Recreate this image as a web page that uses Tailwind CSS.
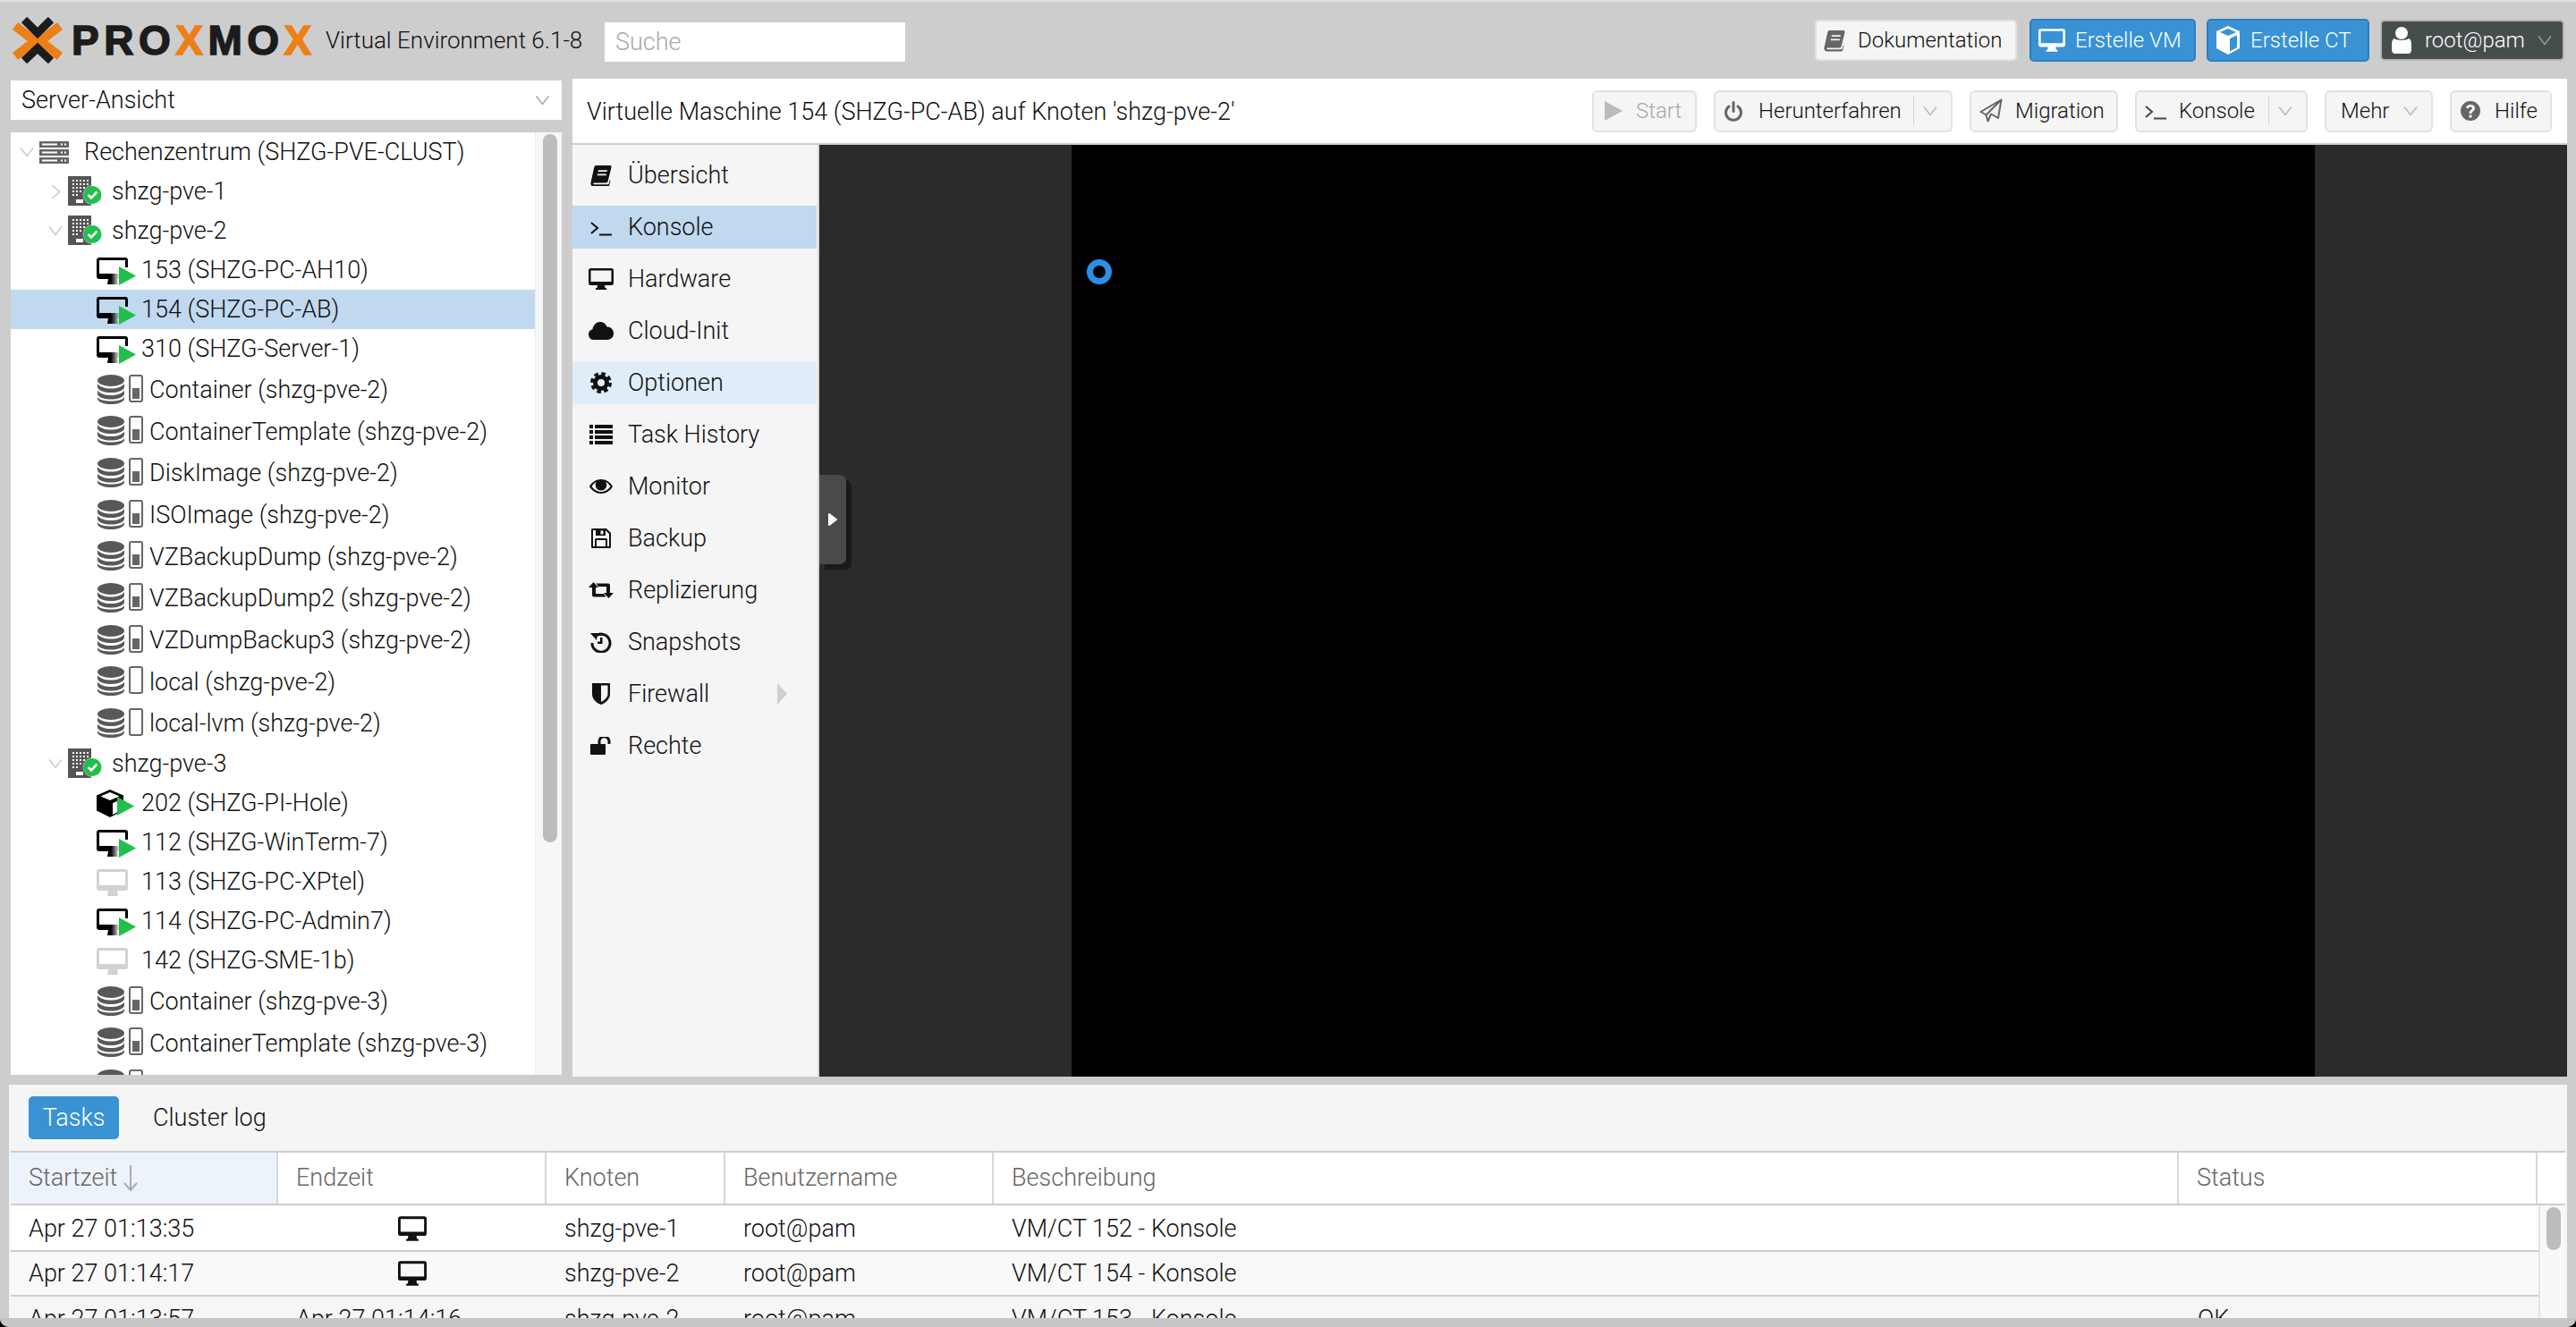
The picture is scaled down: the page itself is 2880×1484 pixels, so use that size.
<!DOCTYPE html>
<html lang="de">
<head>
  <meta charset="UTF-8" />
  <title>Proxmox Virtual Environment</title>
  <script src="https://cdn.jsdelivr.net/npm/@tailwindcss/browser@4"></script>
</head>
<body class="bg-black">
<!-- icon sheet -->
<svg class="absolute w-0 h-0">
  <defs>
    <linearGradient id="fade" x1="0" x2="1" y1="0" y2="0"><stop offset="0" stop-color="#fff"/><stop offset="1" stop-color="#000"/></linearGradient>
    <mask id="vmfade" maskUnits="userSpaceOnUse" x="0" y="0" width="44" height="34">
      <rect width="44" height="34" fill="#fff"/>
      <rect x="16" y="14" width="10" height="20" fill="url(#fade)"/>
      <rect x="26" y="14" width="18" height="20" fill="#000"/>
    </mask>
    <symbol id="vm-run" viewBox="0 0 44 34">
      <path mask="url(#vmfade)" fill="#000" fill-rule="evenodd" d="M3 3h29a3 3 0 0 1 3 3v18a3 3 0 0 1-3 3h-9l1 6h-12l1-6H3a3 3 0 0 1-3-3V6a3 3 0 0 1 3-3zM3 6v15h29V6z"/>
      <path fill="#21bf4b" d="M25 13l19 10.500L25 34z"/>
    </symbol>
    <symbol id="vm-off" viewBox="0 0 44 34">
      <path fill="#d2d2d2" fill-rule="evenodd" d="M3 3h29a3 3 0 0 1 3 3v18a3 3 0 0 1-3 3h-9l1 6h-12l1-6H3a3 3 0 0 1-3-3V6a3 3 0 0 1 3-3zM3 6v15h29V6z"/>
    </symbol>
    <symbol id="ct-run" viewBox="0 0 44 34">
      <path fill="#000" d="M15 2l15 6.500v17L15 33 0 25.500v-17z"/>
      <path fill="#fff" d="M15 5l10.500 4.500L15 14 4.500 9.500z"/>
      <path fill="#fff" d="M18 17l10-4v12l-10 5z"/>
      <path fill="#21bf4b" d="M23 10l19 10.500L23 31z"/>
    </symbol>
    <symbol id="node" viewBox="0 0 38 34">
      <path fill="#555" d="M0 0h26v33H0z"/>
      <path fill="#fff" d="M5 4h2v2H5zM9 4h2v2H9zM13 4h2v2h-2zM17 4h2v2h-2zM21 4h2v2h-2zM5 8h2v2H5zM9 8h2v2H9zM13 8h2v2h-2zM17 8h2v2h-2zM21 8h2v2h-2zM5 12h2v2H5zM9 12h2v2H9zM13 12h2v2h-2zM17 12h2v2h-2zM5 16h2v2H5zM9 16h2v2H9zM13 16h2v2h-2zM5 20h2v2H5zM9 20h2v2H9zM9 26h8v4H9z"/>
      <circle cx="27.500" cy="21" r="11" fill="#fff" fill-opacity=".45"/>
      <circle cx="27.500" cy="21" r="10" fill="#21bf4b"/>
      <path fill="none" stroke="#fff" stroke-width="2.600" d="M22.500 21l3.500 3.500 6.500-7"/>
    </symbol>
    <symbol id="dc" viewBox="0 0 33 25">
      <path fill="#666" fill-rule="evenodd" d="M0 0h33v7H0zM3 2.500v2h17v-2zM24 2.500v2h2v-2zM28 2.500v2h2v-2zM0 9h33v7H0zM3 11.500v2h17v-2zM24 11.500v2h2v-2zM28 11.500v2h2v-2zM0 18h33v7H0zM3 20.500v2h17v-2zM24 20.500v2h2v-2zM28 20.500v2h2v-2z"/>
    </symbol>
    <symbol id="store" viewBox="0 0 51 33">
      <ellipse cx="15" cy="6.500" rx="15" ry="6.500" fill="#585858"/>
      <path fill="#585858" d="M0 10c2 3.500 8 5.500 15 5.500S28 13.500 30 10v4c-1 4-8 6-15 6S1 18 0 14zM0 17.500c2 3.500 8 5.500 15 5.500s13-2 15-5.500v4c-1 4-8 6-15 6s-14-2-15-6zM0 25c2 3.500 8 4.500 15 4.500S28 28.500 30 25v2.500C29 31 22 33 15 33S1 31 0 27.500z"/>
      <rect x="36" y="1" width="14" height="29" rx="2" fill="none" stroke="#666" stroke-width="2"/>
      <rect x="39" y="15" width="8" height="12" fill="#666"/>
    </symbol>
    <symbol id="store-empty" viewBox="0 0 51 33">
      <ellipse cx="15" cy="6.500" rx="15" ry="6.500" fill="#585858"/>
      <path fill="#585858" d="M0 10c2 3.500 8 5.500 15 5.500S28 13.500 30 10v4c-1 4-8 6-15 6S1 18 0 14zM0 17.500c2 3.500 8 5.500 15 5.500s13-2 15-5.500v4c-1 4-8 6-15 6s-14-2-15-6zM0 25c2 3.500 8 4.500 15 4.500S28 28.500 30 25v2.500C29 31 22 33 15 33S1 31 0 27.500z"/>
      <rect x="36" y="1" width="14" height="29" rx="2" fill="none" stroke="#666" stroke-width="2"/>
    </symbol>
    <symbol id="book" viewBox="0 0 24 24">
      <path fill="currentColor" fill-rule="evenodd" d="M6.500 1H22c1.200 0 1.800 1 1.500 2.200l-3.800 15.300c-.3 1.200-1 2-2.500 2H4.700c-1.300 0-1.600.7-1.300 1.200.3.400.9.600 1.600.6h14.500c.6 0 1-.3 1.300-1l1-4 .7.600-1.300 5.300c-.2.700-.9 1.300-1.800 1.300H4C1.800 24.500 0 23 .4 20.700L4.300 3C4.600 1.900 5.400 1 6.500 1zM9 6.200l-.4 1.800h10l.4-1.800zM8 10.500l-.4 1.800h10l.4-1.800z"/>
    </symbol>
    <symbol id="term" viewBox="0 0 24 24">
      <path fill="none" stroke="currentColor" stroke-width="2" d="M1 7l7 6-7 6M10 20.500h14"/>
    </symbol>
    <symbol id="desk" viewBox="0 0 28 24">
      <path fill="currentColor" fill-rule="evenodd" d="M2.500 0h23A2.500 2.500 0 0 1 28 2.500v14a2.500 2.500 0 0 1-2.500 2.500H18l.5 3h1.500v2H8v-2h1.500l.5-3H2.500A2.500 2.500 0 0 1 0 16.500v-14A2.500 2.500 0 0 1 2.500 0zM2.500 2.500V15h23V2.500z"/>
    </symbol>
    <symbol id="cloud" viewBox="0 0 28 20">
      <path fill="currentColor" d="M6 20a6 6 0 0 1-1.500-11.800C5 3.500 9 0 13 0c3.500 0 6.500 2.200 7.500 5.500 4-.5 7.500 3 7.500 7.500 0 4-3 7-7 7z"/>
    </symbol>
    <symbol id="gear" viewBox="0 0 24 24">
      <circle cx="12" cy="12" r="6.500" fill="none" stroke="currentColor" stroke-width="5"/>
      <circle cx="12" cy="12" r="10" fill="none" stroke="currentColor" stroke-width="4" stroke-dasharray="4.500 3.354"/>
    </symbol>
    <symbol id="list" viewBox="0 0 26 22">
      <path fill="currentColor" d="M0 0h4v4H0zM6 0h20v4H6zM0 6h4v4H0zM6 6h20v4H6zM0 12h4v4H0zM6 12h20v4H6zM0 18h4v4H0zM6 18h20v4H6z"/>
    </symbol>
    <symbol id="eye" viewBox="0 0 26 16">
      <path fill="currentColor" fill-rule="evenodd" d="M13 0c5.500 0 10.500 3.500 13 8-2.500 4.500-7.500 8-13 8S2.500 12.500 0 8c2.500-4.500 7.500-8 13-8zM2.500 8c2.500 3.500 6.500 6 10.500 6s8-2.500 10.500-6C21.500 5 19.500 3.500 18 2.800c.8 1.100 1.300 2.200 1.300 3.400a6.300 6.300 0 0 1-12.600 0c0-1.300.5-2.400 1.300-3.400C6.500 3.500 4.500 5 2.500 8z"/>
    </symbol>
    <symbol id="save" viewBox="0 0 22 22">
      <path fill="currentColor" fill-rule="evenodd" d="M1.500 0H17l5 5v15.500a1.500 1.500 0 0 1-1.500 1.500h-19A1.500 1.500 0 0 1 0 20.500v-19A1.500 1.500 0 0 1 1.500 0zM2 2v18h2v-7.500A1.500 1.500 0 0 1 5.500 11h11a1.500 1.500 0 0 1 1.500 1.500V20h2V6l-4-4v6H5V2zM6 13v7h10v-7zM10.500 2.500V6.500H13.500V2.500z"/>
    </symbol>
    <symbol id="retweet" viewBox="0 0 28 18">
      <path fill="currentColor" d="M0 6l5.500-6L11 6H8v7h9l2.500 3.500H6a2 2 0 0 1-2-2V6zM28 12l-5.500 6L17 12h3V5h-9L8.500 1.500H22a2 2 0 0 1 2 2V12z"/>
    </symbol>
    <symbol id="history" viewBox="0 0 24 24">
      <path fill="none" stroke="currentColor" stroke-width="3" d="M5 6a10 10 0 1 1-3 7"/>
      <path fill="currentColor" d="M0 2l8 0-1 8zM11 7h2.500v7H8v-2.500h3z"/>
    </symbol>
    <symbol id="shield" viewBox="0 0 20 24">
      <path fill="currentColor" fill-rule="evenodd" d="M0 0h20v12c0 6-5 10-10 12C5 22 0 18 0 12zM10 2.500v18.500c4-2 7.500-5 7.500-9V2.500z"/>
    </symbol>
    <symbol id="unlock" viewBox="0 0 24 20">
      <path fill="currentColor" d="M1 8h15a1 1 0 0 1 1 1v10a1 1 0 0 1-1 1H1a1 1 0 0 1-1-1V9a1 1 0 0 1 1-1z"/>
      <path fill="none" stroke="currentColor" stroke-width="3" d="M10 9V6a5.500 5.500 0 0 1 11-1.500V8"/>
    </symbol>
    <symbol id="power" viewBox="0 0 20 24">
      <path fill="none" stroke="currentColor" stroke-width="3" stroke-linecap="round" d="M5 6.500a8.500 8.500 0 1 0 10 0M10 2v10"/>
    </symbol>
    <symbol id="plane" viewBox="0 0 26 28">
      <path fill="none" stroke="currentColor" stroke-width="2" stroke-linejoin="round" d="M24.500 1.500L1.500 15l6 3.500L24.500 1.500 21 22l-8-4.500-3.500 8-2-7"/>
    </symbol>
    <symbol id="help" viewBox="0 0 22 22">
      <path fill="currentColor" fill-rule="evenodd" d="M11 0a11 11 0 1 1 0 22 11 11 0 0 1 0-22zM9.500 15.500v3h3v-3zM11 4C8 4 6.500 5.500 6 7.500l2.500 1c.3-1.200 1.200-2 2.400-2 1.200 0 2 .6 2 1.500 0 1.800-3.400 2.300-3.400 5.500v.5h3v-.4c0-1.700 3.500-2.400 3.500-5.800C16 5.500 13.800 4 11 4z"/>
    </symbol>
    <symbol id="user" viewBox="0 0 22 30">
      <circle cx="11" cy="7" r="7" fill="currentColor"/>
      <path fill="currentColor" d="M3 13c2 2.500 14 2.500 16 0 2 .5 3 3 3 7v6c0 2-1.500 4-3.500 4h-15C1.500 30 0 28 0 26v-6c0-4 1-6.500 3-7z"/>
    </symbol>
    <symbol id="cube-w" viewBox="0 0 26 32">
      <path fill="currentColor" fill-rule="evenodd" d="M13 0l13 6v19l-13 7-13-7V6zM13 3L4 7l9 4 9-4zM15 14v14.500l8-4.500V10.500z"/>
    </symbol>
    <symbol id="chev" viewBox="0 0 16 12">
      <path fill="none" stroke="currentColor" stroke-width="1.600" d="M1 1.500l7 9 7-9"/>
    </symbol>
    <symbol id="chev-r" viewBox="0 0 12 18">
      <path fill="none" stroke="currentColor" stroke-width="1.600" d="M1.500 1l9 8-9 8"/>
    </symbol>
  </defs>
</svg>

<div class="w-[2880px] h-[1484px] bg-[#cdcdcd] rounded-b-[10px] overflow-hidden flex flex-col font-['Roboto',sans-serif] font-light text-[27px] text-[#111]">

  <!-- header -->
  <header class="h-[88px] shrink-0 border-t-[2px] border-[#e2e2e2] flex items-center pr-[13px]">
    <div class="flex items-center w-[364px] pl-[14px] shrink-0">
      <svg class="w-[56px] h-[52px] shrink-0" viewBox="0 0 56 52">
        <path fill="none" stroke="#ec7f16" stroke-width="10" d="M3 10l22 17-22 17M53 10L31 27l22 17" />
        <path fill="none" stroke="#1c1c1c" stroke-width="9" d="M13 3l15 15 15-15M13 49l15-14 15 14" />
      </svg>
      <span class="ml-[10px] font-['Liberation_Sans',sans-serif] text-[46px] leading-none font-bold tracking-[5.500px] [-webkit-text-stroke:1.5px_#1c1c1c] text-[#1c1c1c] whitespace-nowrap">PRO<span class="text-[#ec7f16] [-webkit-text-stroke:1.5px_#ec7f16]">X</span>MO<span class="text-[#ec7f16] [-webkit-text-stroke:1.5px_#ec7f16]">X</span></span>
    </div>
    <span class="whitespace-nowrap w-[312px] shrink-0 text-[26px]">Virtual Environment 6.1-8</span>
    <div class="w-[336px] h-[44px] bg-white flex items-center pl-[12px] text-[#aaa] mt-[4px]">Suche</div>
    <div class="ml-auto flex items-center gap-[12px] text-[24px]">
      <button class="w-[226px] h-[46px] rounded-[5px] bg-[#f5f5f5] border-[2px] border-[#e2e2e2] flex items-center pl-[8px] mr-[2px]">
        <svg class="w-[24px] h-[26px] text-[#666]"><use href="#book"/></svg>
        <span class="ml-[14px]">Dokumentation</span>
      </button>
      <button class="w-[186px] h-[48px] rounded-[5px] bg-[#3892d4] border-[2px] border-[#2a80c0] text-white flex items-center pl-[8px]">
        <svg class="w-[30px] h-[30px]"><use href="#desk"/></svg>
        <span class="ml-[11px]">Erstelle VM</span>
      </button>
      <button class="w-[182px] h-[48px] rounded-[5px] bg-[#3892d4] border-[2px] border-[#2a80c0] text-white flex items-center pl-[9px]">
        <svg class="w-[26px] h-[32px]"><use href="#cube-w"/></svg>
        <span class="ml-[12px]">Erstelle CT</span>
      </button>
      <button class="w-[206px] h-[46px] rounded-[5px] bg-[#464d4d] border-[2px] border-[#b4b4b4] text-white flex items-center pl-[11px]">
        <svg class="w-[22px] h-[30px]"><use href="#user"/></svg>
        <span class="ml-[15px]">root@pam</span>
        <svg class="w-[16px] h-[12px] ml-[14px] text-[#999]"><use href="#chev"/></svg>
      </button>
    </div>
  </header>

  <!-- main -->
  <div class="h-[1116px] shrink-0 flex pl-[12px] gap-[12px]">
    <!-- left column -->
    <div class="w-[616px] shrink-0 flex flex-col pt-[2px] pb-[2px]">
      <div class="h-[44px] bg-white flex items-center justify-between pl-[12px] pr-[13px] shrink-0">
        <span>Server-Ansicht</span>
        <svg class="w-[17px] h-[12px] text-[#aaa]"><use href="#chev"/></svg>
      </div>
      <div class="mt-[14px] flex-1 min-h-0 bg-white relative overflow-hidden">
        <!-- scrollbar -->
        <div class="absolute right-0 top-0 bottom-0 w-[30px] bg-[#f7f7f7] border-l border-[#ebebeb]">
          <div class="absolute left-[8px] top-[2px] w-[16px] h-[792px] rounded-full bg-[#bcbcbc]"></div>
        </div>

        <div class="h-[44px] flex items-center pl-[10px] mr-[30px]">
          <svg class="w-[16px] h-[12px] text-[#ccc]"><use href="#chev"/></svg>
          <svg class="w-[33px] h-[25px] ml-[6px]"><use href="#dc"/></svg>
          <span class="ml-[17px] whitespace-nowrap">Rechenzentrum (SHZG-PVE-CLUST)</span>
        </div>
        <div class="h-[44px] flex items-center pl-[45px] mr-[30px]">
          <svg class="w-[11px] h-[17px] text-[#ccc]"><use href="#chev-r"/></svg>
          <svg class="w-[38px] h-[34px] ml-[8px]"><use href="#node"/></svg>
          <span class="ml-[11px]">shzg-pve-1</span>
        </div>
        <div class="h-[44px] flex items-center pl-[42px] mr-[30px]">
          <svg class="w-[16px] h-[12px] text-[#ccc]"><use href="#chev"/></svg>
          <svg class="w-[38px] h-[34px] ml-[6px]"><use href="#node"/></svg>
          <span class="ml-[11px]">shzg-pve-2</span>
        </div>
        <div class="h-[44px] flex items-center pl-[96px] mr-[30px]"><svg class="w-[44px] h-[34px]"><use href="#vm-run"/></svg><span class="ml-[6px]">153 (SHZG-PC-AH10)</span></div>
        <div class="h-[44px] flex items-center pl-[96px] mr-[30px] bg-[#c0d9ef]"><svg class="w-[44px] h-[34px]"><use href="#vm-run"/></svg><span class="ml-[6px]">154 (SHZG-PC-AB)</span></div>
        <div class="h-[44px] flex items-center pl-[96px] mr-[30px]"><svg class="w-[44px] h-[34px]"><use href="#vm-run"/></svg><span class="ml-[6px]">310 (SHZG-Server-1)</span></div>
        <div class="h-[46.67px] flex items-center pl-[97px] mr-[30px]"><svg class="w-[51px] h-[33px]"><use href="#store"/></svg><span class="ml-[7px] mt-[2px]">Container (shzg-pve-2)</span></div>
        <div class="h-[46.67px] flex items-center pl-[97px] mr-[30px]"><svg class="w-[51px] h-[33px]"><use href="#store"/></svg><span class="ml-[7px] mt-[2px]">ContainerTemplate (shzg-pve-2)</span></div>
        <div class="h-[46.67px] flex items-center pl-[97px] mr-[30px]"><svg class="w-[51px] h-[33px]"><use href="#store"/></svg><span class="ml-[7px] mt-[2px]">DiskImage (shzg-pve-2)</span></div>
        <div class="h-[46.67px] flex items-center pl-[97px] mr-[30px]"><svg class="w-[51px] h-[33px]"><use href="#store"/></svg><span class="ml-[7px] mt-[2px]">ISOImage (shzg-pve-2)</span></div>
        <div class="h-[46.67px] flex items-center pl-[97px] mr-[30px]"><svg class="w-[51px] h-[33px]"><use href="#store"/></svg><span class="ml-[7px] mt-[2px]">VZBackupDump (shzg-pve-2)</span></div>
        <div class="h-[46.67px] flex items-center pl-[97px] mr-[30px]"><svg class="w-[51px] h-[33px]"><use href="#store"/></svg><span class="ml-[7px] mt-[2px]">VZBackupDump2 (shzg-pve-2)</span></div>
        <div class="h-[46.67px] flex items-center pl-[97px] mr-[30px]"><svg class="w-[51px] h-[33px]"><use href="#store"/></svg><span class="ml-[7px] mt-[2px]">VZDumpBackup3 (shzg-pve-2)</span></div>
        <div class="h-[46.67px] flex items-center pl-[97px] mr-[30px]"><svg class="w-[51px] h-[33px]"><use href="#store-empty"/></svg><span class="ml-[7px] mt-[2px]">local (shzg-pve-2)</span></div>
        <div class="h-[46.67px] flex items-center pl-[97px] mr-[30px]"><svg class="w-[51px] h-[33px]"><use href="#store-empty"/></svg><span class="ml-[7px] mt-[2px]">local-lvm (shzg-pve-2)</span></div>
        <div class="h-[44px] flex items-center pl-[42px] mr-[30px]">
          <svg class="w-[16px] h-[12px] text-[#ccc]"><use href="#chev"/></svg>
          <svg class="w-[38px] h-[34px] ml-[6px]"><use href="#node"/></svg>
          <span class="ml-[11px] mt-[1px]">shzg-pve-3</span>
        </div>
        <div class="h-[44px] flex items-center pl-[96px] mr-[30px]"><svg class="w-[44px] h-[34px]"><use href="#ct-run"/></svg><span class="ml-[6px]">202 (SHZG-PI-Hole)</span></div>
        <div class="h-[44px] flex items-center pl-[96px] mr-[30px]"><svg class="w-[44px] h-[34px]"><use href="#vm-run"/></svg><span class="ml-[6px]">112 (SHZG-WinTerm-7)</span></div>
        <div class="h-[44px] flex items-center pl-[96px] mr-[30px]"><svg class="w-[44px] h-[34px]"><use href="#vm-off"/></svg><span class="ml-[6px]">113 (SHZG-PC-XPtel)</span></div>
        <div class="h-[44px] flex items-center pl-[96px] mr-[30px]"><svg class="w-[44px] h-[34px]"><use href="#vm-run"/></svg><span class="ml-[6px]">114 (SHZG-PC-Admin7)</span></div>
        <div class="h-[44px] flex items-center pl-[96px] mr-[30px]"><svg class="w-[44px] h-[34px]"><use href="#vm-off"/></svg><span class="ml-[6px]">142 (SHZG-SME-1b)</span></div>
        <div class="h-[46.67px] flex items-center pl-[97px] mr-[30px]"><svg class="w-[51px] h-[33px]"><use href="#store"/></svg><span class="ml-[7px] mt-[2px]">Container (shzg-pve-3)</span></div>
        <div class="h-[46.67px] flex items-center pl-[97px] mr-[30px]"><svg class="w-[51px] h-[33px]"><use href="#store"/></svg><span class="ml-[7px] mt-[2px]">ContainerTemplate (shzg-pve-3)</span></div>
        <div class="h-[46.67px] flex items-center pl-[97px] mr-[30px]"><svg class="w-[51px] h-[33px]"><use href="#store"/></svg></div>
      </div>
    </div>

    <!-- right column -->
    <div class="w-[2230px] shrink-0 flex flex-col">
      <div class="h-[72px] bg-white shrink-0 flex items-center pl-[16px] pr-[17px]">
        <span class="whitespace-nowrap mt-[2px]">Virtuelle Maschine 154 (SHZG-PC-AB) auf Knoten 'shzg-pve-2'</span>
        <div class="ml-auto flex items-center gap-[19px] text-[24px]">
          <button class="w-[117px] h-[47px] rounded-[6px] bg-[#f5f5f5] border-[2px] border-[#e2e2e2] flex items-center pl-[12px] text-[#a8a8a8]">
            <svg class="w-[20px] h-[22px] text-[#bbb]" viewBox="0 0 20 22"><path fill="currentColor" d="M0 0l20 11L0 22z"/></svg>
            <span class="ml-[15px]">Start</span>
          </button>
          <button class="w-[267px] h-[47px] rounded-[6px] bg-[#f5f5f5] border-[2px] border-[#e2e2e2] flex items-center pl-[10px]">
            <svg class="w-[20px] h-[25px] text-[#666]"><use href="#power"/></svg>
            <span class="ml-[18px] w-[173px] text-left">Herunterfahren</span>
            <span class="w-[1px] h-[32px] bg-[#d4d4d4]"></span>
            <svg class="w-[16px] h-[12px] ml-[10px] text-[#bbb]"><use href="#chev"/></svg>
          </button>
          <button class="w-[166px] h-[47px] rounded-[6px] bg-[#f5f5f5] border-[2px] border-[#e2e2e2] flex items-center pl-[9px]">
            <svg class="w-[26px] h-[28px] text-[#666]"><use href="#plane"/></svg>
            <span class="ml-[14px]">Migration</span>
          </button>
          <button class="w-[193px] h-[47px] rounded-[6px] bg-[#f5f5f5] border-[2px] border-[#e2e2e2] flex items-center pl-[9px]">
            <svg class="w-[24px] h-[24px] text-[#444]"><use href="#term"/></svg>
            <span class="ml-[14px] w-[100px] text-left">Konsole</span>
            <span class="w-[1px] h-[32px] bg-[#d4d4d4]"></span>
            <svg class="w-[16px] h-[12px] ml-[10px] text-[#bbb]"><use href="#chev"/></svg>
          </button>
          <button class="w-[121px] h-[47px] rounded-[6px] bg-[#f5f5f5] border-[2px] border-[#e2e2e2] flex items-center pl-[16px]">
            <span class="w-[70px] text-left">Mehr</span>
            <svg class="w-[16px] h-[12px] text-[#bbb]"><use href="#chev"/></svg>
          </button>
          <button class="w-[114px] h-[47px] rounded-[6px] bg-[#f5f5f5] border-[2px] border-[#e2e2e2] flex items-center pl-[10px]">
            <svg class="w-[22px] h-[22px] text-[#666]"><use href="#help"/></svg>
            <span class="ml-[16px]">Hilfe</span>
          </button>
        </div>
      </div>
      <div class="flex-1 min-h-0 mt-[2px] flex">
        <!-- sub menu -->
        <nav class="w-[276px] shrink-0 bg-[#f5f5f5] border-r-[2px] border-[#d8d8d8] pr-[1px] pt-[10px]">
          <a class="h-[48px] mb-[10px] flex items-center"><svg class="w-[24px] h-[24px] ml-[20px] mr-[18px] text-[#111]"><use href="#book"/></svg>Übersicht</a>
          <a class="h-[48px] mb-[10px] flex items-center bg-[#c0d9ef]"><svg class="w-[24px] h-[24px] ml-[20px] mr-[18px] text-[#111]"><use href="#term"/></svg>Konsole</a>
          <a class="h-[48px] mb-[10px] flex items-center"><svg class="w-[28px] h-[24px] ml-[18px] mr-[16px] text-[#111]"><use href="#desk"/></svg>Hardware</a>
          <a class="h-[48px] mb-[10px] flex items-center"><svg class="w-[28px] h-[20px] ml-[18px] mr-[16px] text-[#111]"><use href="#cloud"/></svg>Cloud-Init</a>
          <a class="h-[48px] mb-[10px] flex items-center bg-[#e0edf8]"><svg class="w-[24px] h-[24px] ml-[20px] mr-[18px] text-[#111]"><use href="#gear"/></svg>Optionen</a>
          <a class="h-[48px] mb-[10px] flex items-center"><svg class="w-[26px] h-[22px] ml-[19px] mr-[17px] text-[#111]"><use href="#list"/></svg>Task History</a>
          <a class="h-[48px] mb-[10px] flex items-center"><svg class="w-[26px] h-[16px] ml-[19px] mr-[17px] text-[#111]"><use href="#eye"/></svg>Monitor</a>
          <a class="h-[48px] mb-[10px] flex items-center"><svg class="w-[22px] h-[22px] ml-[21px] mr-[19px] text-[#111]"><use href="#save"/></svg>Backup</a>
          <a class="h-[48px] mb-[10px] flex items-center"><svg class="w-[28px] h-[18px] ml-[18px] mr-[16px] text-[#111]"><use href="#retweet"/></svg>Replizierung</a>
          <a class="h-[48px] mb-[10px] flex items-center"><svg class="w-[24px] h-[24px] ml-[20px] mr-[18px] text-[#111]"><use href="#history"/></svg>Snapshots</a>
          <a class="h-[48px] mb-[10px] flex items-center"><svg class="w-[20px] h-[24px] ml-[22px] mr-[20px] text-[#111]"><use href="#shield"/></svg>Firewall
            <svg class="w-[11px] h-[24px] ml-auto mr-[33px] text-[#cfcfcf]" viewBox="0 0 11 24"><path fill="currentColor" d="M0 0l11 12L0 24z"/></svg>
          </a>
          <a class="h-[48px] flex items-center"><svg class="w-[24px] h-[20px] ml-[20px] mr-[18px] text-[#111]"><use href="#unlock"/></svg>Rechte</a>
        </nav>
        <!-- console area -->
        <div class="flex-1 min-w-0 bg-[#2b2b2b] relative flex justify-start pl-[282px]">
          <div class="w-[1390px] bg-black relative">
            <div class="absolute left-[17px] top-[128px] w-[28px] h-[28px] rounded-full border-[7px] border-[#2a90e6]"></div>
          </div>
          <!-- collapse handle -->
          <div class="absolute left-0 top-[369px] w-[30px] h-[100px] bg-[#4a4a4a] rounded-r-[7px] shadow-[6px_6px_0_#1a1a1a] flex items-center justify-center">
            <svg class="w-[10px] h-[14px]" viewBox="0 0 10 14"><path fill="#fff" stroke="#fff" stroke-width="2" stroke-linejoin="round" d="M1 1l8 6-8 6z"/></svg>
          </div>
        </div>
      </div>
    </div>
  </div>

  <!-- bottom panel -->
  <div class="mt-[9px] ml-[10px] w-[2860px] h-[261px] shrink-0 bg-[#f5f5f5] flex flex-col overflow-hidden">
    <div class="h-[74px] shrink-0 flex items-center pl-[22px]">
      <div class="w-[101px] h-[48px] rounded-[5px] bg-[#3892d4] text-white flex items-center justify-center">Tasks</div>
      <span class="ml-[38px]">Cluster log</span>
    </div>
    <div class="flex-1 min-h-0 mx-[2px] bg-white border-t-[2px] border-[#cdcdcd] flex flex-col overflow-hidden">
      <div class="h-[57px] shrink-0 flex text-[#666] border-b-[2px] border-[#cdcdcd] box-content">
        <div class="w-[299px] bg-[#edf3fa] border-r-[2px] border-[#d8d8d8] flex items-center pl-[20px]">Startzeit
          <svg class="w-[18px] h-[30px] ml-[6px] text-[#aaa]" viewBox="0 0 18 30"><path fill="none" stroke="currentColor" stroke-width="2" d="M9 0v28M2 20l7 8 7-8"/></svg>
        </div>
        <div class="w-[300px] border-r-[2px] border-[#d8d8d8] flex items-center pl-[20px]">Endzeit</div>
        <div class="w-[200px] border-r-[2px] border-[#d8d8d8] flex items-center pl-[20px]">Knoten</div>
        <div class="w-[300px] border-r-[2px] border-[#d8d8d8] flex items-center pl-[20px]">Benutzername</div>
        <div class="w-[1325px] border-r-[2px] border-[#d8d8d8] flex items-center pl-[20px]">Beschreibung</div>
        <div class="w-[401px] border-r-[2px] border-[#d8d8d8] flex items-center pl-[20px]">Status</div>
      </div>
      <div class="flex-1 min-h-0 flex overflow-hidden">
        <div class="w-[2826px] shrink-0">
          <div class="h-[52px] flex items-center bg-white border-b-[2px] border-[#cdcdcd] pt-[2px]">
            <span class="w-[299px] pl-[20px]">Apr 27 01:13:35</span>
            <span class="w-[300px] flex justify-center"><svg class="w-[32px] h-[30px] text-[#111]"><use href="#desk"/></svg></span>
            <span class="w-[200px] pl-[20px]">shzg-pve-1</span>
            <span class="w-[300px] pl-[20px]">root@pam</span>
            <span class="w-[1325px] pl-[20px]">VM/CT 152 - Konsole</span>
          </div>
          <div class="h-[50px] flex items-center bg-[#f9f9f9] border-b-[2px] border-[#cdcdcd]">
            <span class="w-[299px] pl-[20px]">Apr 27 01:14:17</span>
            <span class="w-[300px] flex justify-center"><svg class="w-[32px] h-[30px] text-[#111]"><use href="#desk"/></svg></span>
            <span class="w-[200px] pl-[20px]">shzg-pve-2</span>
            <span class="w-[300px] pl-[20px]">root@pam</span>
            <span class="w-[1325px] pl-[20px]">VM/CT 154 - Konsole</span>
          </div>
          <div class="h-[50px] flex items-center bg-[#f6f6f6]">
            <span class="w-[299px] pl-[20px]">Apr 27 01:13:57</span>
            <span class="w-[300px] pl-[20px]">Apr 27 01:14:16</span>
            <span class="w-[200px] pl-[20px]">shzg-pve-2</span>
            <span class="w-[300px] pl-[20px]">root@pam</span>
            <span class="w-[1325px] pl-[20px]">VM/CT 153 - Konsole</span>
            <span class="pl-[21px]">OK</span>
          </div>
        </div>
        <div class="flex-1 bg-[#f8f8f8] border-l-[2px] border-[#e4e4e4] pl-[7px] pt-[2px]">
          <div class="w-[16px] h-[48px] rounded-full bg-[#bcbcbc]"></div>
        </div>
      </div>
    </div>
  </div>
  <div class="flex-1 bg-[#c6c6c6]"></div>
</div>
</body>
</html>
